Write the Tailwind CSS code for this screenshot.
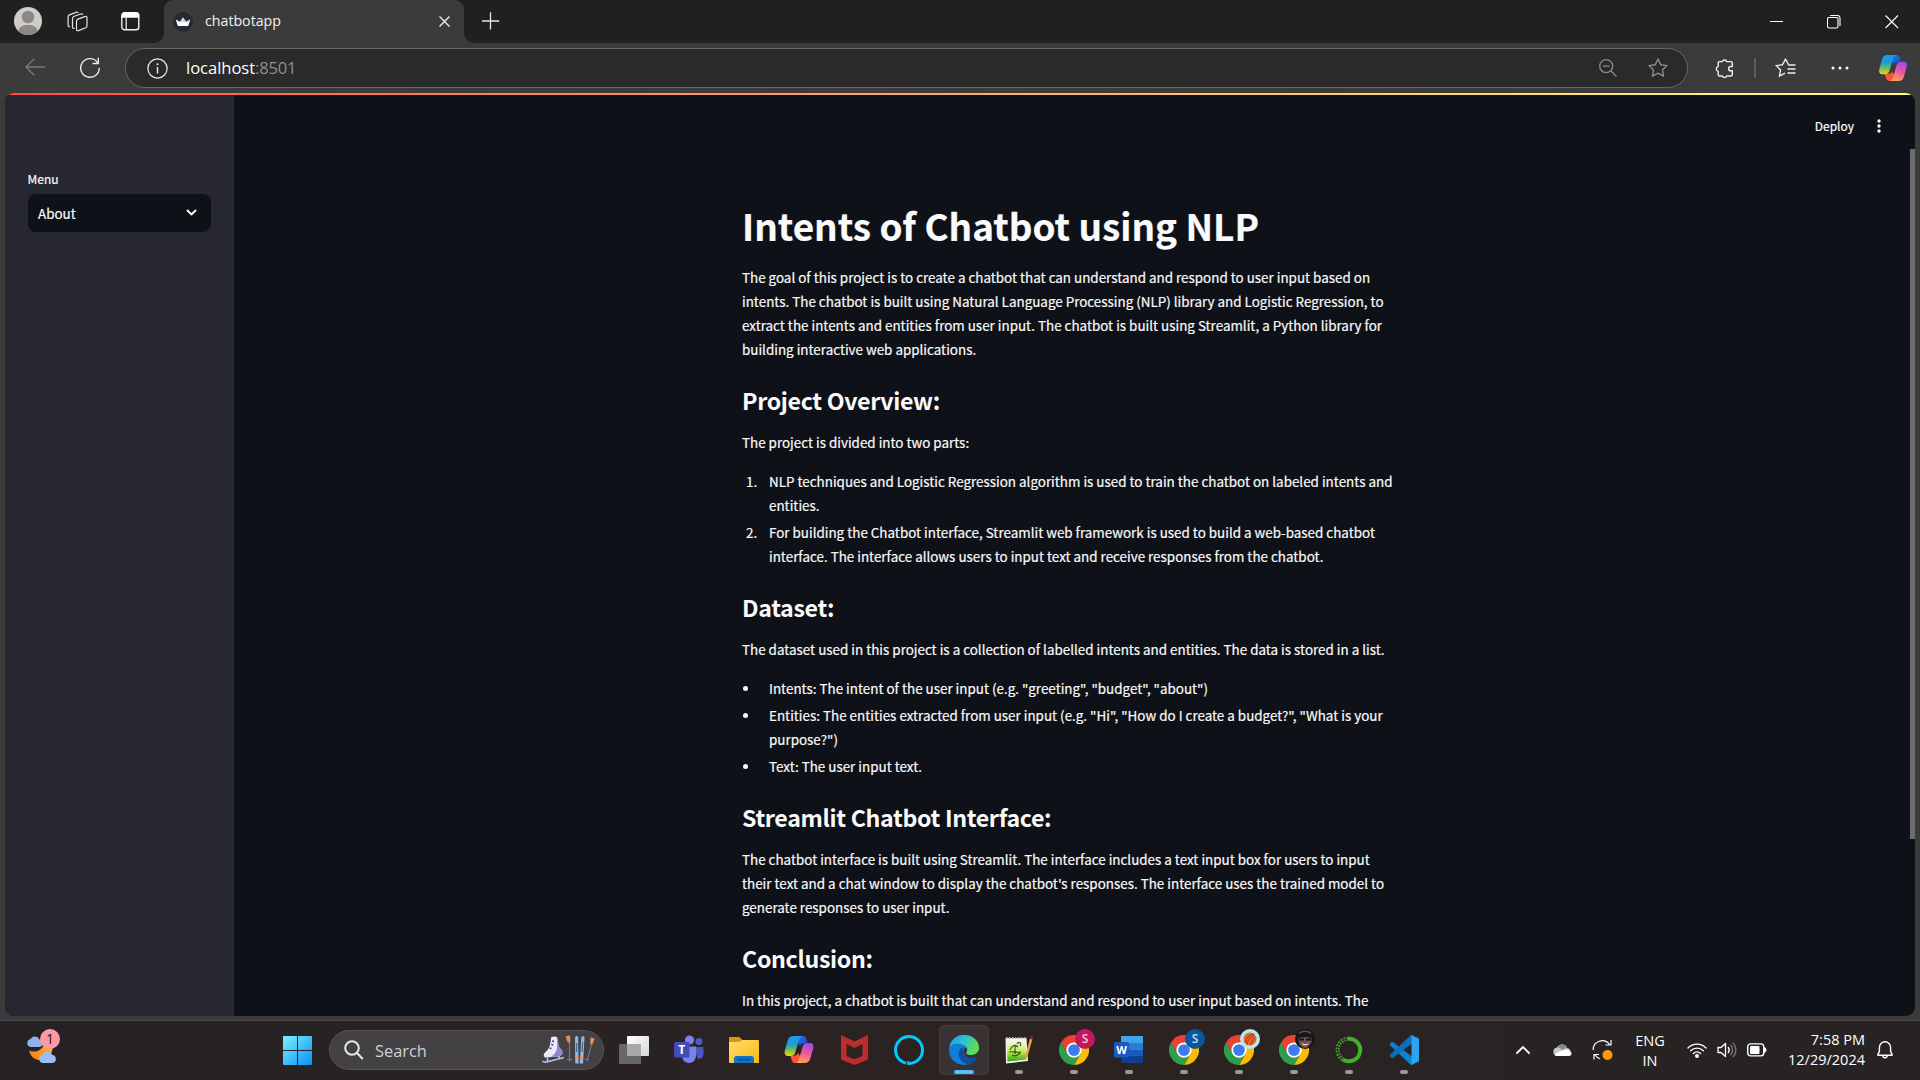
<!DOCTYPE html>
<html lang="en">
<head>
<meta charset="utf-8">
<title>chatbotapp</title>
<script src="https://cdn.jsdelivr.net/npm/@tailwindcss/browser@4"></script>
</head>
<body class="w-[1920px] h-[1080px] overflow-hidden bg-[#3b3b3b] flex flex-col text-white font-['Open_Sans',sans-serif]">

<svg width="0" height="0" class="absolute">
  <defs>
    <linearGradient id="cpA" x1="0" y1="0" x2="0" y2="1"><stop offset="0" stop-color="#1f9bf0"/><stop offset=".4" stop-color="#1c9ad6"/><stop offset=".7" stop-color="#6fbf5a"/><stop offset="1" stop-color="#f7d50a"/></linearGradient>
    <linearGradient id="cpB" x1="0.6" y1="0" x2="0.3" y2="1"><stop offset="0" stop-color="#a248e8"/><stop offset=".5" stop-color="#ee5a9a"/><stop offset="1" stop-color="#ffa655"/></linearGradient>
    <linearGradient id="cpC" x1="0" y1="0" x2="1" y2="1"><stop offset="0" stop-color="#1b8be8"/><stop offset="1" stop-color="#1637c8"/></linearGradient>
    <linearGradient id="win" x1="0" y1="0" x2="1" y2="1"><stop offset="0" stop-color="#7cf0ff"/><stop offset="1" stop-color="#0a90f5"/></linearGradient>
    <linearGradient id="fold" x1="0" y1="0" x2="1" y2="1"><stop offset="0" stop-color="#ffdd6b"/><stop offset="1" stop-color="#fbb914"/></linearGradient>
    <linearGradient id="edA" x1="0" y1="0" x2="1" y2="0.5"><stop offset="0" stop-color="#1e9be8"/><stop offset=".5" stop-color="#2fc0d0"/><stop offset="1" stop-color="#62e04c"/></linearGradient>
    <linearGradient id="moon" x1="0" y1="1" x2="1" y2="0"><stop offset="0" stop-color="#f07c16"/><stop offset="1" stop-color="#ffc02e"/></linearGradient>
    <linearGradient id="tv" x1="0" y1="0" x2="1" y2="1"><stop offset="0" stop-color="#ffffff"/><stop offset="1" stop-color="#d5d5d5"/></linearGradient>
    <linearGradient id="np" x1="0" y1="0" x2="0" y2="1"><stop offset="0" stop-color="#f3f8e4"/><stop offset=".5" stop-color="#c3ea4a"/><stop offset="1" stop-color="#2fa51c"/></linearGradient>
    <symbol id="copilot" viewBox="0 0 28 26">
      <path d="M14 0h3.500c2 0 3 1 3.600 3l1.200 4.300h-4c-2 0-2.800 1-3.300 2.500L12 5Z" fill="url(#cpC)"/>
      <path d="M14 26h-3.500c-2 0-3-1-3.600-3l-1.200-4.300h4c2 0 2.800-1 3.300-2.500L16 21Z" fill="#f4583a"/>
      <path d="M8.500 0H17c-1.500.3-2.300 1.500-2.800 3.200L10.500 15.500c-.8 2.600-2 3.700-4.500 3.700H3C.7 19.200-.3 17.300.2 14.800L3 4.500C3.800 1.500 5.500 0 8.500 0Z" fill="url(#cpA)"/>
      <path d="M19.500 26H11c1.500-.3 2.300-1.500 2.800-3.200L17.500 10.500c.8-2.600 2-3.700 4.500-3.700h3c2.300 0 3.300 1.900 2.800 4.400L25 21.500c-.8 3-2.500 4.500-5.500 4.500Z" fill="url(#cpB)"/>
    </symbol>
    <symbol id="chrome" viewBox="0 0 48 48">
      <path d="M24 24 3.200 12A24 24 0 0 1 44.800 12Z" fill="#ea4335"/>
      <path d="M3.200 12 13.600 30 24 12Z" fill="#ea4335"/>
      <path d="M44.800 12H24l10.400 18L24 48A24 24 0 0 0 44.800 12Z" fill="#fbbc05"/>
      <path d="M3.200 12 13.600 30A12 12 0 0 0 34.400 30L24 48A24 24 0 0 1 3.200 12Z" fill="#2f9e4b"/>
      <circle cx="24" cy="24" r="12.200" fill="#fff"/><circle cx="24" cy="24" r="9.400" fill="#3b7ded"/>
    </symbol>
    <symbol id="cloud" viewBox="0 0 20 14">
      <path d="M5 14a4.500 4.500 0 0 1-.4-8.900A5.600 5.600 0 0 1 15 5.300 4.400 4.400 0 0 1 15.500 14Z"/>
    </symbol>
  </defs>
</svg>

<!-- tab strip -->
<header class="h-[43px] shrink-0 bg-[#202020] flex">
  <div class="w-[164px] flex items-start pl-[14px] pt-[7px]">
    <svg width="28" height="28" viewBox="0 0 28 28"><circle cx="14" cy="14" r="14" fill="#cfcdca"/><circle cx="14" cy="10" r="6.200" fill="#8d8884"/><path d="M4.500 24.200C5 19.800 9 18 14 18s9 1.800 9.500 6.200A14 14 0 0 1 4.500 24.200Z" fill="#8d8884"/></svg>
    <svg class="ml-[24px] mt-[4px]" width="22" height="22" viewBox="0 0 22 22" fill="none" stroke="#e4e4e4" stroke-width="1.200" stroke-linejoin="round"><path d="M12 8.100 19.300 5.400c1-.4 1.700.1 1.700 1.200v8.200c0 1-.4 1.600-1.300 2L12.500 19.600c-1.100.4-2-.1-2-1.200V10.200c0-1 .4-1.700 1.500-2.100Z"/><path d="M8.600 17.200c-1.300.4-2.100-.1-2.100-1.200V7.500c0-1 .4-1.600 1.300-2L14.500 3c1-.4 1.900-.1 2.200.7"/><path d="M4.200 15.600c-1.300.4-2.100-.1-2.100-1.200V5.900c0-1 .4-1.600 1.300-2L10 1.400c1-.4 1.900-.1 2.200.7"/></svg>
    <svg class="ml-[33px] mt-[5px]" width="19" height="19" viewBox="0 0 19 19"><rect x=".8" y=".8" width="17" height="17" rx="2.800" fill="none" stroke="#f2f2f2" stroke-width="1.400"/><path d="M.5 5.800V3.200C.5 1.500 1.600.3 3.300.3h12c1.700 0 2.800 1.200 2.800 2.900v2.600Z" fill="#fff"/><path d="M5.200 5v13" stroke="#f2f2f2" stroke-width="1.200"/></svg>
  </div>
  <div class="relative w-[300px] h-[43px] rounded-t-[9px] bg-[#3b3b3b] flex items-center">
    <svg class="absolute left-[-10px] bottom-0" width="10" height="10"><path d="M0 10A10 10 0 0 0 10 0V10Z" fill="#3b3b3b"/></svg>
    <svg class="absolute right-[-10px] bottom-0" width="10" height="10"><path d="M10 10A10 10 0 0 1 0 0V10Z" fill="#3b3b3b"/></svg>
    <svg class="ml-[9px]" width="20" height="20" viewBox="0 0 20 20"><circle cx="10" cy="10" r="10" fill="#262833"/><path d="m2.800 7.500 4.200 2.300L10 5.500l3 4.300 4.200-2.300-2 6.500H4.800Z" fill="#fff"/><path d="m10 5.500 3 4.300 4.200-2.300-1 3.200-9.200-.9Z" fill="#d5d3d3"/></svg>
    <span class="ml-[12px] text-[14.2px] leading-[20px] mt-[-2px] w-[234px] text-[#f2f2f2]">chatbotapp</span>
    <svg class="absolute left-[275px] top-[16px]" width="11" height="11" viewBox="0 0 11 11" stroke="#eee" stroke-width="1.400"><path d="m.5.5 10 10M10.500.5l-10 10"/></svg>
  </div>
  <svg class="ml-[18px] mt-[12px]" width="18" height="18" viewBox="0 0 18 18" stroke="#e6e6e6" stroke-width="1.300"><path d="M8.500.3v17.200M0 9h17.200"/></svg>
  <div class="ml-auto mr-[21px] mt-[15px] flex gap-[44px]">
    <svg width="14" height="14"><path d="M1 6.500h13" stroke="#fff"/></svg>
    <svg width="14" height="14" fill="none" stroke="#fff" stroke-width="1.100"><rect x=".5" y="2.500" width="10.500" height="10.500" rx="1.500"/><path d="M3 .5h7.500c1.500 0 2.500 1 2.500 2.500V11"/></svg>
    <svg width="14" height="14" stroke="#fff" stroke-width="1.100"><path d="m.5.5 12.500 12.500M13 .5.5 13"/></svg>
  </div>
</header>

<!-- toolbar -->
<div class="h-[50px] shrink-0 bg-[#3b3b3b] flex items-center">
  <svg class="ml-[25px] mt-[-2px]" width="20" height="18" viewBox="0 0 20 18" fill="none" stroke="#7b7b7b" stroke-width="1.300"><path d="M20 9H1M9.500.5 1 9l8.500 8.500"/></svg>
  <svg class="ml-[34px] mt-[-1px]" width="22" height="22" viewBox="0 0 22 22" fill="none" stroke="#ececec" stroke-width="1.400"><path d="M20.300 11a9.300 9.300 0 1 1-2-5.800l1 1.300"/><path d="M19.300.8v5.700h-5.800"/></svg>
  <div class="ml-[24px] w-[1563px] h-[40px] rounded-full border border-[#666] bg-[#2a2a2a] flex items-center">
    <svg class="ml-[21px]" width="21" height="21" viewBox="0 0 21 21"><circle cx="10.500" cy="10.500" r="9.600" fill="none" stroke="#eee" stroke-width="1.200"/><path d="M10.500 9v6.500" stroke="#eee" stroke-width="1.400"/><circle cx="10.500" cy="6.300" r="1" fill="#eee"/></svg>
    <span class="ml-[18px] text-[16.600px] leading-[22px] mt-[-1px] tracking-[-0.050px] text-white">localhost<span class="text-[#8f8f8f] tracking-[-0.250px]">:8501</span></span>
    <svg class="ml-auto" width="18" height="18" viewBox="0 0 18 18" fill="none" stroke="#8c8c8c" stroke-width="1.300"><circle cx="7.200" cy="7.200" r="6.500"/><path d="m12 12 5.500 5.500M4 7.200h6.500"/></svg>
    <svg class="ml-[31px] mr-[19px]" width="20" height="20" viewBox="0 0 20 20" fill="none" stroke="#8c8c8c" stroke-width="1.400" stroke-linejoin="round"><path d="m10 1 2.700 5.800 6.300.8-4.600 4.300 1.200 6.300L10 15.100l-5.600 3.100 1.200-6.300L1 7.600l6.300-.8Z"/></svg>
  </div>
  <svg class="ml-[26px]" width="20" height="21" viewBox="0 0 20 21" fill="none" stroke="#efefef" stroke-width="1.400" stroke-linejoin="round"><path d="M5.500 3.600h2.800a2.300 2.300 0 0 1 4.400 0h4.300c.8 0 1.300.5 1.300 1.300v3.600h-1.500a2.100 2.100 0 0 0 0 4.300h1.500v3.900c0 .8-.5 1.300-1.300 1.300h-4.300a2.300 2.300 0 0 1-4.400 0H5.500c-.8 0-1.300-.5-1.300-1.300v-3.400a2.600 2.600 0 0 1 0-5V4.900c0-.8.5-1.300 1.300-1.300Z"/></svg>
  <div class="ml-[20px] w-[2px] h-[20px] bg-[#5c5c5c]"></div>
  <svg class="ml-[19px]" width="21" height="20" viewBox="0 0 21 20" fill="none" stroke="#efefef" stroke-width="1.400" stroke-linejoin="round"><path d="M20.500 7h-6.800L10.500 1 7.500 6.800 1 7.600l4.600 4.300-1.200 6.300L10 15.100M12.500 11h8M12.500 15h8"/></svg>
  <svg class="ml-[35px]" width="18" height="4" fill="#fff"><circle cx="2" cy="2" r="1.500"/><circle cx="9" cy="2" r="1.500"/><circle cx="16" cy="2" r="1.500"/></svg>
  <svg class="ml-[30px]" width="28" height="26"><use href="#copilot"/></svg>
</div>

<!-- page -->
<div class="relative mx-[5px] w-[1910px] h-[923px] shrink-0 rounded-[9px] overflow-hidden bg-[#0e1117] flex font-['Noto_Sans_CJK_SC',sans-serif] text-[#fafafa] [-webkit-text-stroke:0.2px_#fafafa]">
  <div class="absolute left-0 top-0 w-full h-[2px] bg-linear-to-r from-[#ff4b4b] to-[#fffd80]"></div>
  <aside class="w-[229px] h-full bg-[#262730] pl-[23px] pt-[77px]">
    <div class="text-[12px] leading-[18px] ml-[-0.500px]">Menu</div>
    <div class="mt-[6px] w-[183px] h-[38px] rounded-[8px] bg-[#0e1117] flex items-center justify-between pl-[10px] pr-[14px]">
      <span class="text-[13.410px] leading-[20px]">About</span>
      <svg width="11" height="8" viewBox="0 0 11 8" fill="none" stroke="#fafafa" stroke-width="1.900" stroke-linecap="round" stroke-linejoin="round"><path d="m1.500 1.500 4 4 4-4"/></svg>
    </div>
  </aside>
  <main class="flex-1 pl-[508px] pt-[110px] text-[13.425px] leading-[24px] whitespace-nowrap">
    <h1 class="text-[36.880px] leading-[44px] font-bold">Intents of Chatbot using NLP</h1>
    <p class="mt-[18.300px]">The goal of this project is to create a chatbot that can understand and respond to user input based on<br>intents. The chatbot is built using Natural Language Processing (NLP) library and Logistic Regression, to<br>extract the intents and entities from user input. The chatbot is built using Streamlit, a Python library for<br>building interactive web applications.</p>
    <h2 class="mt-[24.700px] mb-[16.300px] text-[23.200px] tracking-[-0.330px] leading-[28px] font-bold [-webkit-text-stroke:0px]">Project Overview:</h2>
    <p>The project is divided into two parts:</p>
    <ol class="mt-[15px] flex flex-col gap-[3px]">
      <li class="flex"><span class="w-[27px] pl-[4px]">1.</span><span>NLP techniques and Logistic Regression algorithm is used to train the chatbot on labeled intents and<br>entities.</span></li>
      <li class="flex"><span class="w-[27px] pl-[4px]">2.</span><span>For building the Chatbot interface, Streamlit web framework is used to build a web-based chatbot<br>interface. The interface allows users to input text and receive responses from the chatbot.</span></li>
    </ol>
    <h2 class="mt-[24.700px] mb-[16.300px] text-[23.200px] tracking-[-0.330px] leading-[28px] font-bold [-webkit-text-stroke:0px]">Dataset:</h2>
    <p>The dataset used in this project is a collection of labelled intents and entities. The data is stored in a list.</p>
    <ul class="mt-[15px] flex flex-col gap-[3px]">
      <li class="flex"><span class="w-[27px] pl-[1px] pt-[9.500px]"><span class="block size-[5px] rounded-full bg-[#fafafa]"></span></span><span>Intents: The intent of the user input (e.g. "greeting", "budget", "about")</span></li>
      <li class="flex"><span class="w-[27px] pl-[1px] pt-[9.500px]"><span class="block size-[5px] rounded-full bg-[#fafafa]"></span></span><span>Entities: The entities extracted from user input (e.g. "Hi", "How do I create a budget?", "What is your<br>purpose?")</span></li>
      <li class="flex"><span class="w-[27px] pl-[1px] pt-[9.500px]"><span class="block size-[5px] rounded-full bg-[#fafafa]"></span></span><span>Text: The user input text.</span></li>
    </ul>
    <h2 class="mt-[24.700px] mb-[16.300px] text-[23.200px] tracking-[-0.330px] leading-[28px] font-bold [-webkit-text-stroke:0px]">Streamlit Chatbot Interface:</h2>
    <p>The chatbot interface is built using Streamlit. The interface includes a text input box for users to input<br>their text and a chat window to display the chatbot's responses. The interface uses the trained model to<br>generate responses to user input.</p>
    <h2 class="mt-[24.700px] mb-[16.300px] text-[23.200px] tracking-[-0.330px] leading-[28px] font-bold [-webkit-text-stroke:0px]">Conclusion:</h2>
    <p>In this project, a chatbot is built that can understand and respond to user input based on intents. The</p>
  </main>
  <div class="absolute right-[34px] top-[23px] h-[20px] flex items-center gap-[23px]">
    <span class="text-[12px] leading-[20px]">Deploy</span>
    <svg width="4" height="14" fill="#fafafa"><circle cx="2" cy="2" r="1.700"/><circle cx="2" cy="7" r="1.700"/><circle cx="2" cy="12" r="1.700"/></svg>
  </div>
  <div class="absolute right-0 top-[56px] w-[5px] h-[690px] bg-[#6b6c70]"></div>
</div>

<!-- taskbar -->
<footer class="mt-[4px] h-[60px] shrink-0 border-t border-[#494646] bg-linear-to-r from-[#262225] via-[#2b2322] to-[#272324] flex">
  <div class="w-[283px] pl-[26px] pt-[7px]">
    <svg width="36" height="36" viewBox="0 0 36 36"><path d="M19.500 12c3-1 8 2 7 9.500-1.500 8-9.500 12-16 10-4-1.300-6.500-4.500-7.500-9 6 3 15 0 16.500-10.500Z" fill="url(#moon)"/><use href="#cloud" x="0" y="7" width="18" height="12" fill="#8fb2ee"/><use href="#cloud" x="12" y="22" width="19" height="13" fill="#9dbcf2"/><circle cx="24" cy="11" r="10" fill="#ff99a4"/><text x="24" y="16" font-size="14" text-anchor="middle" fill="#2a1618" font-family="Open Sans">1</text></svg>
  </div>
  <svg class="mt-[15px]" width="29" height="29" viewBox="0 0 29 29" fill="url(#win)"><path d="M1 0H14V14H0V1A1 1 0 0 1 1 0ZM15 0H28A1 1 0 0 1 29 1V14H15ZM0 15H14V29H1A1 1 0 0 1 0 28ZM15 15H29V28A1 1 0 0 1 28 29H15Z"/></svg>
  <div class="ml-[17px] mt-[9px] w-[275px] h-[40px] rounded-full bg-[#444145] border border-[#565356] flex items-center">
    <svg class="ml-[14px]" width="20" height="20" viewBox="0 0 20 20" fill="none" stroke="#e8e8e8" stroke-width="2" stroke-linecap="round"><circle cx="8" cy="8" r="6.800"/><path d="m13 13 5.300 5.500"/></svg>
    <span class="ml-[11px] text-[16.400px] leading-[22px] mt-[1px] text-[#d0d0d0]">Search</span>
    <svg class="ml-auto mr-[8px]" width="54" height="30" viewBox="0 0 54 30" fill="none">
      <path d="M10 2.500c2-1.500 5-1.500 6.500 0 .8 3.500 0 6.500 1.500 9.500 1 2 3.500 3 3.500 5.500 0 2-1.500 3.500-4 4L4 22.500c-2-1.500-1.500-4 .5-5.500 3.500-2.500 5-7 5.500-14.500Z" fill="#e9eafc"/><path d="M15.500 2c.8 0 1.300.2 1.500.7.600 3.300-.2 6.300 1.300 9.300 1 2 3.500 3 3.500 5.500 0 2-1.500 3.500-4 4l-8 .5c7-4 7.200-11 5.700-20Z" fill="#8d86cf"/><path d="m11 6 2 .5M10.300 9.500l2 .5M8.500 13l2 .5" stroke="#4b4374" stroke-width="1.300"/><path d="M1.500 26c2 2 4 1 6 .5L23 22.500M6.500 22.500V26M18 21v3" stroke="#b7c5e8" stroke-width="1.600"/>
      <path d="M28.500 7v20M26 24.500h5M51 8l-5 18M43.500 24l4.500 1" stroke="#76779b" stroke-width="1.100"/><path d="m24.500 1.500 4.500-1 .3 7h-2.600ZM49.500 2.500l4.200 1-2.200 6-2.300-.6Z" fill="#f08b4e"/>
      <path d="M34 2.500c.8-2 2.700-2 3.200 0l.4 26h-3.300ZM40.300 2.500c1-2 3-1.700 3.200.3L42 28.500h-3.300Z" fill="#8db8e8"/><path d="M35.700 8v9M41.700 7l-.7 10" stroke="#40618f" stroke-width="1.100"/><path d="m34.300 21 3.200 1v2.500l-3.200-1ZM39 21.500l3.300-1-.2 3-3.200 1Z" fill="#f2905a"/>
    </svg>
  </div>
  <div class="ml-[2.500px] flex">
    <div class="w-[55px] flex justify-center pt-[14px]">
      <svg width="30" height="30" viewBox="0 0 30 30"><rect x="8" y="1" width="22" height="20" rx="1" fill="url(#tv)"/><rect x="0" y="9" width="22" height="20" rx="1" fill="#676767"/><path d="M8 9h14v12H8Z" fill="#a9a9a9"/></svg>
    </div>
    <div class="w-[55px] flex justify-center pt-[14px]">
      <svg width="30" height="30" viewBox="0 0 30 30"><circle cx="25" cy="6.500" r="3.500" fill="#5059c9"/><path d="M20 12h9.500v7c0 4-3 5.500-6 4.500Z" fill="#4f56c4"/><circle cx="15.500" cy="5" r="4.600" fill="#7b83eb"/><path d="M8 11.500h14V20c0 5-3 8-7 8s-7-3-7-8Z" fill="#7b83eb"/><rect x="0" y="7" width="15.500" height="15.500" rx="1.500" fill="#444bb5"/><text x="7.700" y="19" font-size="12" font-weight="700" text-anchor="middle" fill="#fff" font-family="Open Sans">T</text></svg>
    </div>
    <div class="w-[55px] flex justify-center pt-[14px]">
      <svg width="30" height="30" viewBox="0 0 30 30"><path d="M0 3a1 1 0 0 1 1-1h9l3.500 3v4H0Z" fill="#dc9a08"/><path d="M0 7h10l3.500-2H29a1 1 0 0 1 1 1v22H1a1 1 0 0 1-1-1Z" fill="url(#fold)"/><path d="M5 28v-4.500C5 22 6 21 7.500 21h15c1.500 0 2.500 1 2.500 2.500V28Z" fill="#1273c4"/><path d="M9 24.500h12" stroke="#0b4d8c" stroke-width="1.300" stroke-linecap="round"/></svg>
    </div>
    <div class="w-[55px] flex justify-center pt-[15px]"><svg width="30" height="27"><use href="#copilot"/></svg></div>
    <div class="w-[55px] flex justify-center pt-[14px]">
      <svg width="27" height="30" viewBox="0 0 27 30"><path d="M0 0 13.500 6.500 27 0v24.500L13.500 30 0 24.500ZM5.500 9v12l8 3.300 8-3.300V9l-8 4Z" fill="#c02b2b" fill-rule="evenodd"/></svg>
    </div>
    <div class="w-[55px] flex justify-center pt-[14px]">
      <svg width="30" height="30" viewBox="0 0 30 30"><circle cx="15" cy="15" r="13.500" fill="none" stroke="#00caff" stroke-width="3"/><path d="M12.500 26.300 13 30h2l1-3.300Z" fill="#00caff"/><path d="m12.300 27 .7 3.200" stroke="#2a2324" stroke-width="1.200"/></svg>
    </div>
    <div class="w-[55px] flex justify-center pt-[4px]">
      <div class="relative w-[50px] h-[50px] rounded-[5px] bg-[#393132] border border-[#463e3e] flex justify-center pt-[9px]">
        <svg width="30" height="30" viewBox="0 0 30 30"><circle cx="15" cy="15" r="15" fill="#0f7fd8"/><path d="M.5 12C2 4 8 0 15 0c9 0 15 6 15 12.500 0 5-4 7.500-8 7.500-4.500 0-5.500-1.800-4.500-3 1.200-1.500 1-3.500 0-5C14 7.500 4 7 .5 12Z" fill="url(#edA)"/><path d="M14 12c-3 1.500-5 5-4 9 1 4.500 5 8 9.500 8.400 3.500-1 6.500-3.500 8.500-6.700.3-.6-.2-1-.8-.7-5 2.500-11.700 1.500-13.200-4.500-.5-2 0-4 0-5.500Z" fill="#0c4f9e"/><path d="M17.500 17c-1 1.200 0 3 4.500 3 3.500 0 6.500-1.500 7.500-4.500l1.500 5-3.300 1.500c-5 2.500-11.700 1.500-13.200-4.500-.4-1.600.4-4.500 2-5 1.500 1 2 3 1 4.500Z" fill="#393132"/></svg>
        <div class="absolute left-[14px] bottom-0 w-[20px] h-[4px] rounded-full bg-[#4cc2ff]"></div>
      </div>
    </div>
    <div class="w-[55px] relative flex justify-center pt-[14px]">
      <svg width="30" height="30" viewBox="0 0 30 30"><path d="M1.500 3h21l1.500 23-22 2.500Z" fill="#f3f3f1"/><path d="M3 7h18.500l1 17.500L3.300 26.500Z" fill="url(#np)"/><path d="M2 3h21" stroke="#aaa" stroke-width="2" stroke-dasharray="1.500 1.500"/><path d="M6 15c2-5 5-6 8-3M13 9c2-3 5-1 3 2M5 17c4-1 6 1 12 0M8 20c3 2 6 0 8-2M11 11v8" fill="none" stroke="#2d5a1b" stroke-width="1.200"/><path d="M21.500 20 20.500 25.500 23.500 21.500 28.500 4 26 3.300Z" fill="#e9a13a"/><path d="m26.300 4 .8-3.500 2 .6-1 3.500Z" fill="#7a3020"/></svg>
      <div class="absolute left-[23.500px] top-[49px] w-[8px] h-[4px] rounded-full bg-[#9c9999]"></div>
    </div>
    <div class="w-[55px] relative flex justify-center pt-[14px]">
      <svg width="30" height="30"><use href="#chrome"/></svg>
      <div class="absolute left-[28.500px] top-[8px] size-[20px] rounded-full bg-[#c2185b] text-[#f6c3d7] text-[12px] leading-[20px] font-semibold text-center">S</div>
      <div class="absolute left-[23.500px] top-[49px] w-[8px] h-[4px] rounded-full bg-[#9c9999]"></div>
    </div>
    <div class="w-[55px] relative flex justify-center pt-[14px]">
      <svg width="30" height="30" viewBox="0 0 30 30"><path d="M7 2a1 1 0 0 1 1-1h20a1 1 0 0 1 1 1v6H7Z" fill="#41a5ee"/><path d="M7 8h22v7H7Z" fill="#2b7cd3"/><path d="M7 15h22v6H7Z" fill="#185abd"/><path d="M7 21h22v6a1 1 0 0 1-1 1H8a1 1 0 0 1-1-1Z" fill="#103f91"/><rect x="0" y="7" width="15" height="15.500" rx="1.300" fill="#185abd"/><text x="7.500" y="18.800" font-size="11" font-weight="700" text-anchor="middle" fill="#fff" font-family="Open Sans">W</text></svg>
      <div class="absolute left-[23.500px] top-[49px] w-[8px] h-[4px] rounded-full bg-[#9c9999]"></div>
    </div>
    <div class="w-[55px] relative flex justify-center pt-[14px]">
      <svg width="30" height="30"><use href="#chrome"/></svg>
      <div class="absolute left-[28.500px] top-[8px] size-[20px] rounded-full bg-[#0b579c] text-[#c5dcf2] text-[12px] leading-[20px] font-semibold text-center">S</div>
      <div class="absolute left-[23.500px] top-[49px] w-[8px] h-[4px] rounded-full bg-[#9c9999]"></div>
    </div>
    <div class="w-[55px] relative flex justify-center pt-[14px]">
      <svg width="30" height="30"><use href="#chrome"/></svg>
      <svg class="absolute left-[28.500px] top-[8px]" width="20" height="20"><circle cx="10" cy="10" r="10" fill="#b2ebf2"/><circle cx="10" cy="10" r="6.500" fill="#ee6230"/><path d="M5 14c1-5 4-8 9-9M7 16c0-4 3-8 7-9M11 16c0-3 2-6 4-7" fill="none" stroke="#9c3818"/></svg>
      <div class="absolute left-[23.500px] top-[49px] w-[8px] h-[4px] rounded-full bg-[#9c9999]"></div>
    </div>
    <div class="w-[55px] relative flex justify-center pt-[14px]">
      <svg width="30" height="30"><use href="#chrome"/></svg>
      <svg class="absolute left-[28.500px] top-[8px]" width="20" height="20"><circle cx="10" cy="10" r="10" fill="#171516"/><path d="M4 4.500c3-3 9-3 12 0" fill="none" stroke="#555" stroke-width="1.500"/><path d="M3.500 9c4-1.500 9-1.500 13 0v4c-2 4-4 6-6.500 6s-5-2-6.500-6Z" fill="#5d5757"/><path d="M4 9.500h5v2H4ZM11 9.500h5v2h-5Z" fill="#151313"/><path d="M5.500 13c3 2 6 2 9 0-1 3-3 4-4.500 4s-3.500-1-4.500-4Z" fill="#e9dede" stroke="#a33033" stroke-width="1"/></svg>
      <div class="absolute left-[23.500px] top-[49px] w-[8px] h-[4px] rounded-full bg-[#9c9999]"></div>
    </div>
    <div class="w-[55px] relative flex justify-center pt-[14px]">
      <svg width="30" height="30" viewBox="0 0 30 30" fill="none" stroke="#43b02a"><path d="M14 3.700A11.300 11.300 0 1 1 9 24.600" stroke-width="4"/><path d="M9 24.600A11.300 11.300 0 0 1 14 3.700" stroke-width="4" stroke-dasharray="1.800 1.200"/><path d="M9 24.600A11.300 11.300 0 0 1 14 3.700" stroke-width="1" stroke="#2a2526" stroke-dasharray="3 1"/></svg>
      <div class="absolute left-[23.500px] top-[49px] w-[8px] h-[4px] rounded-full bg-[#9c9999]"></div>
    </div>
    <div class="w-[55px] relative flex justify-center pt-[14px]">
      <svg width="30" height="30" viewBox="0 0 30 30"><path d="M1.200 10.500c-.8-.7-.8-1.300 0-2l1.300-1.200c.6-.5 1.200-.4 1.700 0L29 26l-6 3.500c-.7.300-1.200.2-1.800-.3Z" fill="#0d82cf"/><path d="M1.200 19.500c-.8.700-.8 1.300 0 2l1.300 1.200c.6.500 1.200.4 1.700 0L29 4 23 .5c-.7-.3-1.200-.2-1.800.3Z" fill="#0a6fb8"/><path d="M21 29c.6.800 1.400 1 2.200.6l5.600-2.700c.7-.3 1.200-.9 1.200-1.700V4.800c0-.8-.5-1.400-1.200-1.700L23.200.4C22.400 0 21.600.2 21 1c1-.6 1.500 0 1.500 1v26c0 1-.5 1.600-1.500 1Z" fill="#2ba4f2"/></svg>
      <div class="absolute left-[23.500px] top-[49px] w-[8px] h-[4px] rounded-full bg-[#9c9999]"></div>
    </div>
  </div>

  <div class="ml-auto mr-[27px] h-[58px] flex items-center">
    <svg width="14" height="8" viewBox="0 0 14 8" fill="none" stroke="#fff" stroke-width="1.800" stroke-linecap="round"><path d="m1 7 6-6 6 6"/></svg>
    <svg class="ml-[22px]" width="20" height="14" viewBox="0 0 20 14"><path d="M5 13a4.300 4.300 0 0 1 0-8.500 5.600 5.600 0 0 1 10.200.5A4.200 4.200 0 0 1 16 13Z" fill="#c9c9c9"/><path d="M5.500 4A5.400 5.400 0 0 1 15.200 5c-2 0-3 .8-4 2.200Z" fill="#8b8988"/><path d="M3.500 13c-1-1.500 1-3.500 3-4 3-1 5-2.500 7-2.500s5.500 1.500 6 4c.2 1.500-1 2.500-3 2.500Z" fill="#fff"/></svg>
    <svg class="ml-[20px]" width="22" height="22" viewBox="0 0 22 22"><path d="M1.200 11A9 9 0 0 1 17.500 5.500M19 1v5h-5.500M8 19.800a9.200 9.200 0 0 1-5-4M2 20.500v-5h5" fill="none" stroke="#fff" stroke-width="1.200"/><circle cx="15.500" cy="16" r="5" fill="#ff9a0c"/></svg>
    <div class="ml-[20px] mt-[1px] w-[32px] text-[14.500px] leading-[20px] text-center">ENG<br>IN</div>
    <svg class="ml-[21px]" width="20" height="16" viewBox="0 0 20 16" fill="none" stroke="#fff" stroke-width="1.400" stroke-linecap="round"><path d="M1 6a12.500 12.500 0 0 1 18 0M3.700 8.800a8.800 8.800 0 0 1 12.600 0M6.400 11.400a5.100 5.100 0 0 1 7.200 0"/><circle cx="10" cy="14" r="1.300" fill="#fff"/></svg>
    <svg class="ml-[10px]" width="20" height="18" viewBox="0 0 20 18" fill="none" stroke="#fff" stroke-width="1.300" stroke-linejoin="round" stroke-linecap="round"><path d="M1 6.500h3L8.500 2.500v13L4 11.500H1Z"/><path d="M11.300 6.500a4 4 0 0 1 0 5"/><path d="M13.800 4.300a7 7 0 0 1 0 9.400M16.300 2.300a10 10 0 0 1 0 13.400" stroke="#777"/></svg>
    <svg class="ml-[10px]" width="20" height="14" viewBox="0 0 20 14"><rect x=".7" y=".9" width="16" height="12" rx="2.800" fill="none" stroke="#fff" stroke-width="1.400"/><rect x="3" y="3" width="9.500" height="8" rx="1" fill="#fff"/><path d="M17.500 4.500c2 .3 2 4.700 0 5Z" fill="#fff" stroke="#fff"/></svg>
    <div class="ml-[20px] w-[78px] text-[14.500px] leading-[20px] text-right">7:58 PM<br>12/29/2024</div>
    <svg class="ml-[12px]" width="16" height="18" viewBox="0 0 16 18" fill="none" stroke="#fff" stroke-width="1.400" stroke-linejoin="round"><path d="M8 .8a5.600 5.600 0 0 0-5.600 5.600v4L.9 13.600v.6h14.200v-.6l-1.500-3.200v-4A5.600 5.600 0 0 0 8 .8ZM5.800 14.500a2.200 2.200 0 0 0 4.400 0"/></svg>
  </div>
</footer>
</body>
</html>
